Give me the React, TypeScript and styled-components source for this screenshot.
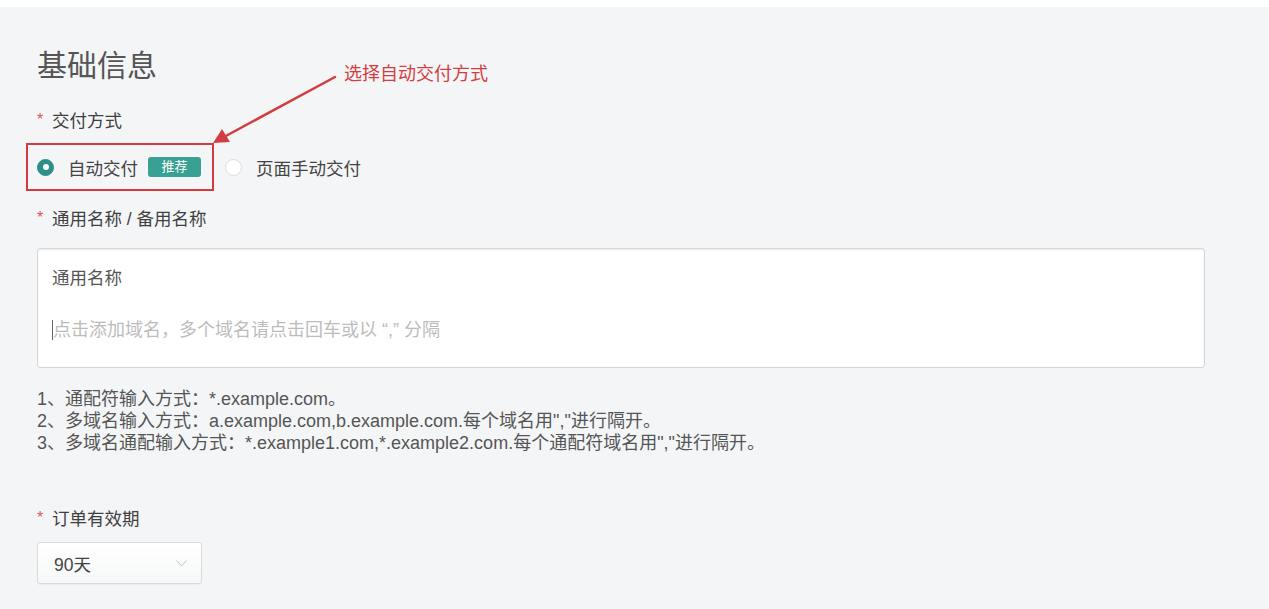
import React from 'react';
import styled, { createGlobalStyle } from 'styled-components';

const GlobalStyle = createGlobalStyle`
  html, body {
    margin: 0;
    padding: 0;
    background: #ffffff;
  }
  body {
    font-family: "Liberation Sans", "Noto Sans CJK SC", sans-serif;
    color: #444;
  }
`;

const Page = styled.div`
  margin-top: 7px;
  min-height: 602px;
  background: #f4f5f7;
`;

const Main = styled.main`
  position: relative;
  padding: 39px 64px 0 37px;
`;

const Title = styled.h1`
  margin: 0;
  font-size: 30px;
  line-height: 40px;
  font-weight: 400;
  color: #555;
`;

const Annotation = styled.div`
  position: absolute;
  left: 344px;
  top: 55px;
  font-size: 18px;
  line-height: 24px;
  color: #d23d3f;
`;

const ArrowSvg = styled.svg`
  position: absolute;
  left: 200px;
  top: 60px;
  overflow: visible;
`;

const Label = styled.div<{ $gap: number }>`
  margin-top: ${p => p.$gap}px;
  display: flex;
  align-items: center;
  font-size: 17.5px;
  line-height: 24px;
  color: #3f3f3f;
`;

const Star = styled.span`
  width: 15px;
  margin-top: -3px;
  font-size: 16px;
  color: #e0575b;
`;

const RadioRow = styled.div`
  margin-top: 10px;
  display: flex;
  align-items: center;
  gap: 11px;
`;

const Highlight = styled.div`
  margin-left: -11px;
  height: 44px;
  padding: 0 11px 0 9px;
  display: flex;
  align-items: center;
  border: 2px solid #d63a3e;
`;

const Option = styled.label`
  display: flex;
  align-items: center;
  font-size: 17.5px;
  color: #444;
`;

const RadioDot = styled.span<{ $checked?: boolean }>`
  width: 17px;
  height: 17px;
  box-sizing: border-box;
  border-radius: 50%;
  margin-right: 14px;
  display: flex;
  align-items: center;
  justify-content: center;
  background: ${p => (p.$checked ? '#2e8f86' : '#ffffff')};
  border: 1px solid ${p => (p.$checked ? '#2e8f86' : '#dcdcdc')};
  &::after {
    content: '';
    width: 6px;
    height: 6px;
    border-radius: 50%;
    background: #fff;
    display: ${p => (p.$checked ? 'block' : 'none')};
  }
`;

const Tag = styled.span`
  margin-left: 10px;
  width: 53px;
  height: 20px;
  border-radius: 3px;
  background: #38a193;
  color: #fff;
  font-size: 13px;
  line-height: 20px;
  text-align: center;
`;

const DomainBox = styled.div`
  margin-top: 17px;
  height: 120px;
  box-sizing: border-box;
  padding: 17px 14px 0;
  background: #fff;
  border: 1px solid #d6d6d6;
  border-radius: 3px;
  box-shadow: inset 0 1px 2px rgba(0, 0, 0, 0.08);
`;

const BoxTitle = styled.div`
  font-size: 17.5px;
  line-height: 24px;
  color: #555;
`;

const InputLine = styled.div`
  margin-top: 28px;
  display: flex;
  align-items: center;
  font-size: 18px;
  line-height: 24px;
  color: #bcbcbc;
`;

const Caret = styled.span`
  width: 1px;
  height: 20px;
  background: #666;
`;

const Notes = styled.div`
  margin-top: 20px;
  font-size: 18px;
  line-height: 22px;
  color: #555;
`;

const Select = styled.div`
  margin-top: 11px;
  width: 165px;
  height: 42px;
  box-sizing: border-box;
  padding: 0 14px 0 16px;
  display: flex;
  align-items: center;
  justify-content: space-between;
  border: 1px solid #dadada;
  border-radius: 3px;
  background: linear-gradient(#ffffff, #f6f7f8);
  box-shadow: 0 1px 1px rgba(0, 0, 0, 0.04);
  font-size: 17.5px;
  color: #444;
`;

const notes = [
  '1、通配符输入方式：*.example.com。',
  '2、多域名输入方式：a.example.com,b.example.com.每个域名用","进行隔开。',
  '3、多域名通配输入方式：*.example1.com,*.example2.com.每个通配符域名用","进行隔开。',
];

export default function App() {
  return (
    <>
      <GlobalStyle />
      <Page>
        <Main>
          <Title>基础信息</Title>
          <Annotation>选择自动交付方式</Annotation>
          <ArrowSvg width="150" height="90" viewBox="0 0 150 90">
            <line x1="135" y1="10" x2="24" y2="70" stroke="#d23d3f" strokeWidth="2.5" strokeLinecap="round" />
            <polygon points="13,76 22,62 30,75" fill="#d23d3f" />
          </ArrowSvg>

          <Label $gap={23}><Star>*</Star>交付方式</Label>
          <RadioRow>
            <Highlight>
              <Option>
                <RadioDot $checked />
                自动交付
              </Option>
              <Tag>推荐</Tag>
            </Highlight>
            <Option>
              <RadioDot />
              页面手动交付
            </Option>
          </RadioRow>

          <Label $gap={16}><Star>*</Star>通用名称 / 备用名称</Label>
          <DomainBox>
            <BoxTitle>通用名称</BoxTitle>
            <InputLine>
              <Caret />
              点击添加域名，多个域名请点击回车或以 “,” 分隔
            </InputLine>
          </DomainBox>

          <Notes>
            {notes.map(n => (
              <div key={n}>{n}</div>
            ))}
          </Notes>

          <Label $gap={53}><Star>*</Star>订单有效期</Label>
          <Select>
            <span>90天</span>
            <svg width="11" height="7" viewBox="0 0 11 7">
              <polyline points="0.5,0.5 5.5,6 10.5,0.5" fill="none" stroke="#c4c4c4" strokeWidth="1" />
            </svg>
          </Select>
        </Main>
      </Page>
    </>
  );
}
